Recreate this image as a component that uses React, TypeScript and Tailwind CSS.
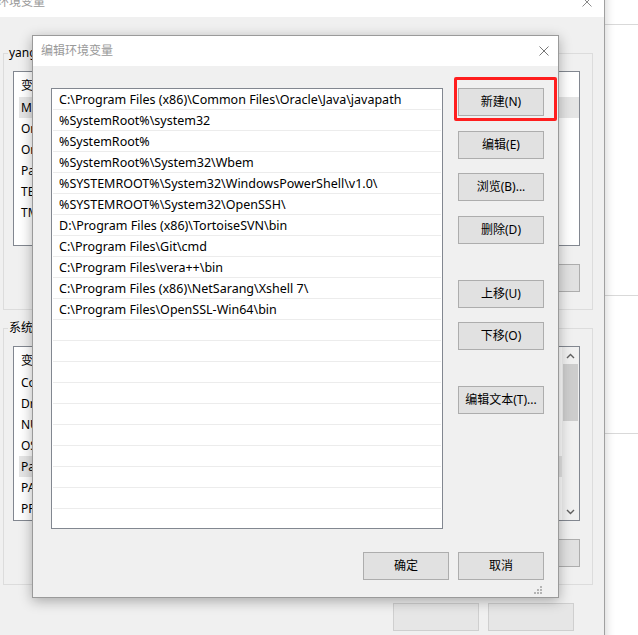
import React from "react";

const paths = [
  "C:\\Program Files (x86)\\Common Files\\Oracle\\Java\\javapath",
  "%SystemRoot%\\system32",
  "%SystemRoot%",
  "%SystemRoot%\\System32\\Wbem",
  "%SYSTEMROOT%\\System32\\WindowsPowerShell\\v1.0\\",
  "%SYSTEMROOT%\\System32\\OpenSSH\\",
  "D:\\Program Files (x86)\\TortoiseSVN\\bin",
  "C:\\Program Files\\Git\\cmd",
  "C:\\Program Files\\vera++\\bin",
  "C:\\Program Files (x86)\\NetSarang\\Xshell 7\\",
  "C:\\Program Files\\OpenSSL-Win64\\bin",
];

const userVars = ["MOZ_PLUGIN_PATH", "OneDrive", "OneDriveConsumer", "Path", "TEMP", "TMP"];
const sysVars = [
  "ComSpec",
  "DriverData",
  "NUMBER_OF_PROCESSORS",
  "OS",
  "Path",
  "PATHEXT",
  "PROCESSOR_ARCHITECTURE",
];

const Btn: React.FC<{ label?: string; faded?: boolean }> = ({ label, faded }) => (
  <button
    className={`flex h-[28px] w-[86px] shrink-0 items-center justify-center border ${
      faded ? "border-[#cfcfcf] bg-[#e6e6e6]" : "border-[#adadad] bg-[#e1e1e1]"
    } text-[12px] leading-none text-black`}
  >
    {label}
  </button>
);

const VarList: React.FC<{ items: string[]; selected: number; scroll?: boolean }> = ({
  items,
  selected,
  scroll,
}) => (
  <div className="relative flex h-[175px] border border-[#828790] bg-white">
    <div className="flex flex-1 flex-col pt-[3px]">
      <div className="flex h-[22px] items-center pl-[7px]">
        <span className="w-[150px]">变量</span>
        <span>值</span>
      </div>
      {items.map((v, i) => (
        <div
          key={v}
          className={`ml-[5px] flex h-[21px] items-center pl-[2px] ${
            i === selected ? "bg-[#e5e5e5]" : ""
          }`}
        >
          {v}
        </div>
      ))}
    </div>
    {scroll && (
      <div className="flex w-[17px] flex-col bg-[#f0f0f0]">
        <div className="flex h-[17px] items-center justify-center">
          <svg width="9" height="6" viewBox="0 0 9 6">
            <path d="M1 5 L4.5 1.5 L8 5" fill="none" stroke="#606060" strokeWidth="1.4" />
          </svg>
        </div>
        <div className="mx-[1px] h-[57px] bg-[#cdcdcd]" />
        <div className="flex-1" />
        <div className="flex h-[17px] items-center justify-center">
          <svg width="9" height="6" viewBox="0 0 9 6">
            <path d="M1 1 L4.5 4.5 L8 1" fill="none" stroke="#606060" strokeWidth="1.4" />
          </svg>
        </div>
      </div>
    )}
  </div>
);

const CloseIcon: React.FC<{ color: string }> = ({ color }) => (
  <svg width="10" height="10" viewBox="0 0 10 10">
    <path d="M0.5 0.5 L9.5 9.5 M9.5 0.5 L0.5 9.5" stroke={color} strokeWidth="1" />
  </svg>
);

export default function App() {
  return (
    <div className="relative h-[635px] w-[638px] overflow-hidden bg-white font-['Noto_Sans','Noto_Sans_CJK_SC',sans-serif] text-[12px] text-black">
      {/* desktop behind */}
      <div className="flex flex-col pl-[604px]">
        <div className="mt-[24px] border-t border-[#d9d9d9]" />
        <div className="mt-[270px] border-t border-[#d9d9d9]" />
        <div className="mt-[137px] border-t border-[#d9d9d9]" />
      </div>

      {/* 环境变量 window */}
      <div className="absolute left-[-10px] top-[-14px] flex h-[670px] w-[615px] flex-col border-r border-[#a0a0a0] shadow-[2px_0_8px_rgba(0,0,0,0.15)]">
        <div className="flex h-[31px] shrink-0 items-center justify-between bg-white pl-[7px] pr-[12px]">
          <span className="text-[#999999]">环境变量</span>
          <CloseIcon color="#8a8a8a" />
        </div>
        <div className="flex flex-1 flex-col bg-[#f0f0f0] pl-[13px] pr-[11px]">
          <fieldset className="mt-[28px] border border-[#dcdcdc] pb-[17px] pl-[9px] pr-[12px]">
            <legend className="ml-[-5px] px-[1px] leading-[16px]">yang 的用户变量(U)</legend>
            <div className="mt-[10px]">
              <VarList items={userVars} selected={0} />
            </div>
            <div className="mt-[18px] flex justify-end gap-[9px]">
              <Btn label="新建(N)..." />
              <Btn label="编辑(E)..." />
              <Btn label="删除(D)" />
            </div>
          </fieldset>
          <fieldset className="mt-[10px] border border-[#dcdcdc] pb-[17px] pl-[9px] pr-[12px]">
            <legend className="ml-[-5px] px-[1px] leading-[16px]">系统变量(S)</legend>
            <div className="mt-[10px]">
              <VarList items={sysVars} selected={4} scroll />
            </div>
            <div className="mt-[18px] flex justify-end gap-[9px]">
              <Btn label="新建(W)..." />
              <Btn label="编辑(I)..." />
              <Btn label="删除(L)" />
            </div>
          </fieldset>
          <div className="mt-[18px] flex justify-end gap-[9px] pr-[19px]">
            <Btn faded />
            <Btn faded />
          </div>
        </div>
      </div>

      {/* 编辑环境变量 dialog */}
      <div className="absolute left-[32px] top-[35px] flex h-[563px] w-[527px] flex-col border border-[#9a9a9a] bg-[#f0f0f0] shadow-[0_3px_12px_rgba(0,0,0,0.3)]">
        <div className="flex h-[30px] shrink-0 items-center justify-between bg-white pl-[8px] pr-[9px]">
          <span className="text-[#999999]">编辑环境变量</span>
          <CloseIcon color="#777777" />
        </div>
        <div className="flex flex-1 flex-col pl-[18px] pr-[14px] pt-[22px]">
          <div className="flex gap-[15px]">
            <div className="flex h-[441px] w-[392px] flex-col overflow-hidden border border-[#828790] bg-white">
              {Array.from({ length: 21 }).map((_, i) => (
                <div
                  key={i}
                  className="mx-[1px] flex h-[21px] shrink-0 items-center border-b border-[#ececec] pl-[6px] pt-[2px] text-[12.5px] leading-none whitespace-nowrap"
                >
                  {paths[i] ?? ""}
                </div>
              ))}
            </div>
            <div className="relative flex flex-col">
              <Btn label="新建(N)" />
              <div className="mt-[15px]">
                <Btn label="编辑(E)" />
              </div>
              <div className="mt-[14px]">
                <Btn label="浏览(B)..." />
              </div>
              <div className="mt-[15px]">
                <Btn label="删除(D)" />
              </div>
              <div className="mt-[36px]">
                <Btn label="上移(U)" />
              </div>
              <div className="mt-[14px]">
                <Btn label="下移(O)" />
              </div>
              <div className="mt-[36px]">
                <Btn label="编辑文本(T)..." />
              </div>
              {/* red highlight */}
              <div className="absolute left-[-4px] top-[-11px] h-[44px] w-[103px] rounded-[2px] border-[3px] border-[#ff1e1e]" />
            </div>
          </div>
          <div className="mt-[23px] flex justify-end gap-[9px]">
            <Btn label="确定" />
            <Btn label="取消" />
          </div>
          <div className="mt-auto flex justify-end pb-[2px] pr-[1px]">
            <svg width="9" height="9" viewBox="0 0 9 9" fill="#b4b4b4">
              <rect x="6" y="0" width="2" height="2" />
              <rect x="3" y="3" width="2" height="2" />
              <rect x="6" y="3" width="2" height="2" />
              <rect x="0" y="6" width="2" height="2" />
              <rect x="3" y="6" width="2" height="2" />
              <rect x="6" y="6" width="2" height="2" />
            </svg>
          </div>
        </div>
      </div>
    </div>
  );
}
